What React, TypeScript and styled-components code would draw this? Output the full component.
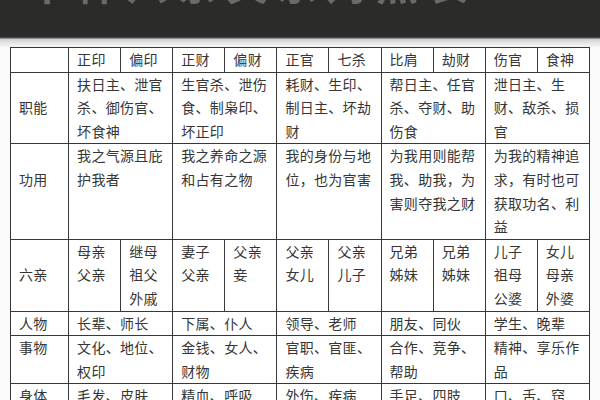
import React from 'react';
import styled, { createGlobalStyle } from 'styled-components';

const Global = createGlobalStyle`
  html, body { margin: 0; padding: 0; overflow: hidden; background: #fafafa; }
  body { font-family: "Noto Sans CJK SC", "Noto Sans", sans-serif; color: #333; }
  #root { width: 600px; height: 400px; overflow: hidden; }
`;

const Banner = styled.header`
  height: 37px;
  background: #2b2b29;
  overflow: hidden;
  padding-left: 26px;
`;

const Title = styled.h1`
  margin: -39px 0 0;
  font-size: 42px;
  line-height: 42px;
  font-weight: 700;
  letter-spacing: 8px;
  color: #6a6a67;
  white-space: nowrap;
`;

const Divider = styled.div`
  height: 10px;
  background: linear-gradient(#4a4a48 0, #4a4a48 1px, #cfcfcf 2px, #e6e6e6 6px, #f6f6f6 100%);
`;

const Sheet = styled.main`
  padding-left: 10px;
`;

const Table = styled.table`
  border-collapse: collapse;
  table-layout: fixed;
  width: 580px;
  background: #fff;
`;

const LabelCol = styled.col`
  width: 58px;
`;

const DataCol = styled.col`
  width: 52px;
`;

const Cell = styled.td<{ $align?: 'top' | 'middle'; $shift?: number }>`
  border: 1.6px solid #383838;
  padding: ${(p) => p.$shift ?? 0}px 2px 0 8px;
  vertical-align: ${(p) => p.$align ?? 'top'};
  font-size: 14px;
  line-height: 23.6px;
  letter-spacing: 0.3px;
  color: #363636;
  white-space: nowrap;
  overflow: hidden;
`;

const Line = styled.div`
  white-space: nowrap;
`;

type RowData = {
  label: string;
  align?: 'top' | 'middle';
  shift?: number;
  split?: boolean;
  cells: string[][];
};

const header = ['正印', '偏印', '正财', '偏财', '正官', '七杀', '比肩', '劫财', '伤官', '食神'];

const rows: RowData[] = [
  {
    label: '职能',
    align: 'middle',
    cells: [
      ['扶日主、泄官', '杀、御伤官、', '坏食神'],
      ['生官杀、泄伤', '食、制枭印、', '坏正印'],
      ['耗财、生印、', '制日主、坏劫', '财'],
      ['帮日主、任官', '杀、夺财、助', '伤食'],
      ['泄日主、生', '财、敌杀、损', '官'],
    ],
  },
  {
    label: '功用',
    shift: 24,
    cells: [
      ['我之气源且庇', '护我者'],
      ['我之养命之源', '和占有之物'],
      ['我的身份与地', '位，也为官害'],
      ['为我用则能帮', '我、助我，为', '害则夺我之财'],
      ['为我的精神追', '求，有时也可', '获取功名、利', '益'],
    ],
  },
  {
    label: '六亲',
    align: 'middle',
    split: true,
    cells: [
      ['母亲', '父亲'],
      ['继母', '祖父', '外戚'],
      ['妻子', '父亲'],
      ['父亲', '妾'],
      ['父亲', '女儿'],
      ['父亲', '儿子'],
      ['兄弟', '姊妹'],
      ['兄弟', '姊妹'],
      ['儿子', '祖母', '公婆'],
      ['女儿', '母亲', '外婆'],
    ],
  },
  {
    label: '人物',
    cells: [['长辈、师长'], ['下属、仆人'], ['领导、老师'], ['朋友、同伙'], ['学生、晚辈']],
  },
  {
    label: '事物',
    cells: [
      ['文化、地位、', '权印'],
      ['金钱、女人、', '财物'],
      ['官职、官匪、', '疾病'],
      ['合作、竞争、', '帮助'],
      ['精神、享乐作', '品'],
    ],
  },
  {
    label: '身体',
    cells: [
      ['毛发、皮肤', '骨骼'],
      ['精血、呼吸', '内脏'],
      ['外伤、疾病', '筋骨'],
      ['手足、四肢', '肌肉'],
      ['口、舌、窍', '经络'],
    ],
  },
];

export default function App() {
  return (
    <>
      <Global />
      <Banner>
        <Title>十神六亲关系对照表</Title>
      </Banner>
      <Divider />
      <Sheet>
        <Table>
          <colgroup>
            <LabelCol />
            {header.map((h) => (
              <DataCol key={h} />
            ))}
          </colgroup>
          <tbody>
            <tr>
              <Cell />
              {header.map((h) => (
                <Cell key={h}>{h}</Cell>
              ))}
            </tr>
            {rows.map((r) => (
              <tr key={r.label}>
                <Cell $align={r.align} $shift={r.shift}>
                  {r.label}
                </Cell>
                {r.cells.map((lines, i) => (
                  <Cell key={i} colSpan={r.split ? 1 : 2}>
                    {lines.map((l, j) => (
                      <Line key={j}>{l}</Line>
                    ))}
                  </Cell>
                ))}
              </tr>
            ))}
          </tbody>
        </Table>
      </Sheet>
    </>
  );
}
